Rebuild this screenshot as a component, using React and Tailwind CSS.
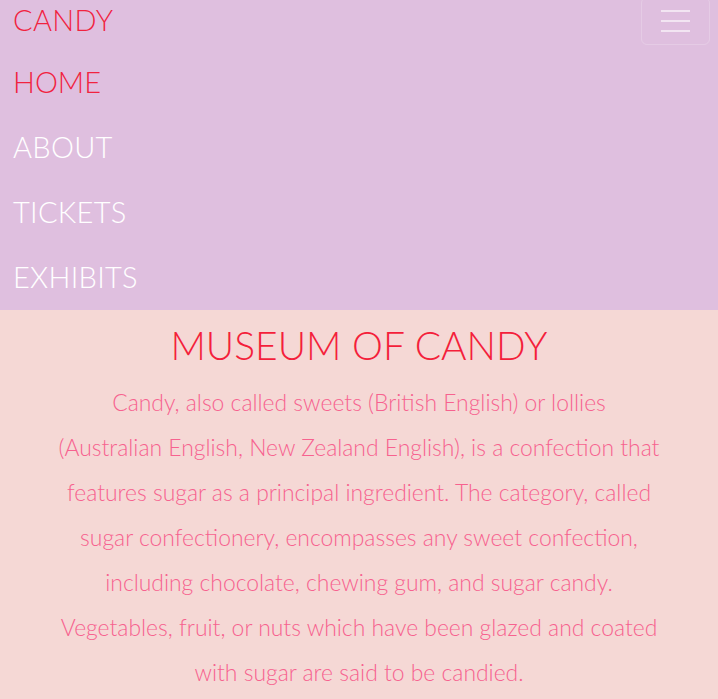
import React from 'react';

const links = ['ABOUT', 'TICKETS', 'EXHIBITS'];

const lines = [
  'Candy, also called sweets (British English) or lollies',
  '(Australian English, New Zealand English), is a confection that',
  'features sugar as a principal ingredient. The category, called',
  'sugar confectionery, encompasses any sweet confection,',
  'including chocolate, chewing gum, and sugar candy.',
  'Vegetables, fruit, or nuts which have been glazed and coated',
  'with sugar are said to be candied.',
];

const App = () => {
  return (
    <div className="min-h-[699px] flex flex-col font-['Lato','Open_Sans',sans-serif] font-light">
      <nav className="bg-[#dfbfdf] h-[310px] pl-[13px] pr-[8px]">
        <div className="flex justify-between items-start h-[49px]">
          <a className="text-[29px] leading-[40px] text-[#f1233f] tracking-[0.3px]">CANDY</a>
          <button className="mt-[-3px] w-[69px] h-[48px] rounded-[6px] border border-white/20 flex flex-col items-center justify-center gap-[8px]">
            <span className="block w-[29px] h-[2px] bg-white/60" />
            <span className="block w-[29px] h-[2px] bg-white/60" />
            <span className="block w-[29px] h-[2px] bg-white/60" />
          </button>
        </div>
        <ul>
          <li className="text-[29px] leading-[65px] text-[#f1233f]">HOME</li>
          {links.map((l) => (
            <li key={l} className="text-[29px] leading-[65px] text-white tracking-[0.3px]">{l}</li>
          ))}
        </ul>
      </nav>
      <main className="flex-1 bg-[#f5d8d5] text-center px-[20px]">
        <h1 className="text-[39px] leading-[70px] text-[#f41f3b]">MUSEUM OF CANDY</h1>
        <p className="text-[22.9px] leading-[45px] text-[#f7628f]">
          {lines.map((t) => (
            <span key={t} className="block">{t}</span>
          ))}
        </p>
      </main>
    </div>
  );
};

export default App;
